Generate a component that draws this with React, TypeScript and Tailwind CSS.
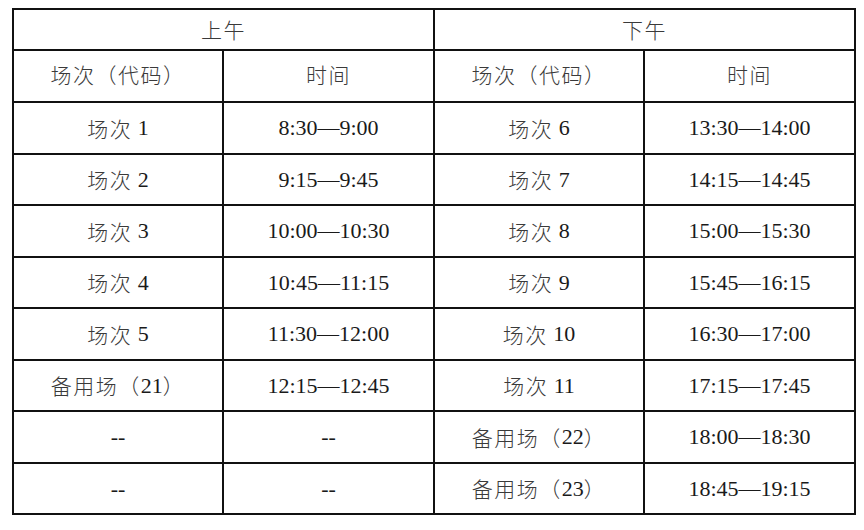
import React from "react";

const rows: [string, string, string, string][] = [
  ["场次 1", "8:30—9:00", "场次 6", "13:30—14:00"],
  ["场次 2", "9:15—9:45", "场次 7", "14:15—14:45"],
  ["场次 3", "10:00—10:30", "场次 8", "15:00—15:30"],
  ["场次 4", "10:45—11:15", "场次 9", "15:45—16:15"],
  ["场次 5", "11:30—12:00", "场次 10", "16:30—17:00"],
  ["备用场（21）", "12:15—12:45", "场次 11", "17:15—17:45"],
  ["--", "--", "备用场（22）", "18:00—18:30"],
  ["--", "--", "备用场（23）", "18:45—19:15"],
];

const CJK = /[\u3000-\u9fff\uff00-\uffef]/;

function Txt({ s }: { s: string }) {
  const parts = s.match(/[\u3000-\u9fff\uff00-\uffef]+|[^\u3000-\u9fff\uff00-\uffef]+/g) || [];
  return (
    <>
      {parts.map((p, i) =>
        CJK.test(p) ? (
          <span
            key={i}
            className="text-[21px] font-light text-[#3a3a3a] tracking-[1.5px] font-['Noto_Sans_CJK_SC',sans-serif]"
          >
            {p}
          </span>
        ) : (
          <span key={i} className="text-[22px] text-[#1a1a1a] font-['Liberation_Serif',serif]">
            {p}
          </span>
        )
      )}
    </>
  );
}

function Cell({ s, h, span }: { s: string; h: string; span?: boolean }) {
  return (
    <div
      className={
        "bg-white flex items-center justify-center whitespace-pre leading-none " +
        h +
        (span ? " col-span-2" : "")
      }
    >
      <Txt s={s} />
    </div>
  );
}

export default function App() {
  const heights = ["h-[50px]", "h-[49px]"];
  return (
    <div className="w-[864px] h-[530px] bg-white pt-[8px] pl-[12px] font-['Liberation_Serif','Noto_Sans_CJK_SC',serif]">
      <div className="w-[844px] grid grid-cols-[208px_209px_208px_209px] gap-[2px] p-[2px] bg-[#111]">
        <Cell s="上午" h="h-[39px]" span />
        <Cell s="下午" h="h-[39px]" span />
        <Cell s="场次（代码）" h="h-[50px] pb-[4px]" />
        <Cell s="时间" h="h-[50px] pb-[4px]" />
        <Cell s="场次（代码）" h="h-[50px] pb-[4px]" />
        <Cell s="时间" h="h-[50px] pb-[4px]" />
        {rows.map((r, i) =>
          r.map((c, j) => <Cell key={`${i}-${j}`} s={c} h={heights[i % 2]} />)
        )}
      </div>
    </div>
  );
}
